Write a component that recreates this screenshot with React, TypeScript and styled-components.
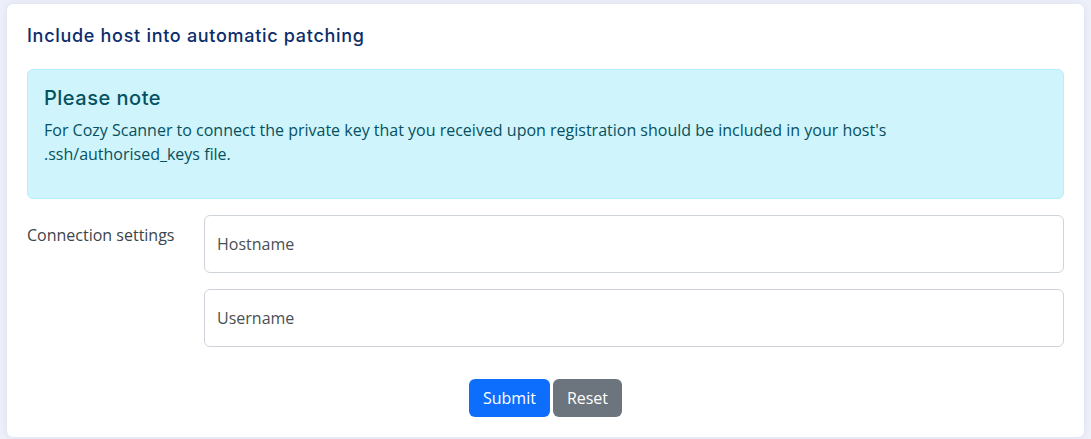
import React from "react";
import styled, { createGlobalStyle } from "styled-components";

const Global = createGlobalStyle`
  html, body { margin: 0; padding: 0; }
  body {
    background: #edf0f9;
    font-family: "Open Sans", "Liberation Sans", sans-serif;
  }
  * { box-sizing: border-box; }
`;

const Page = styled.div`
  padding: 4px 7px 2px 7px;
`;

const Card = styled.section`
  background: #ffffff;
  border-radius: 6px;
  box-shadow: 0 0 6px rgba(180, 190, 225, 0.35);
  padding: 21px 20px 20px 20px;
  height: 433px;
`;

const Title = styled.h5`
  margin: 0 0 22px 0;
  font-family: "Inter", "Noto Sans", sans-serif;
  font-weight: 500;
  font-size: 18px;
  line-height: 22px;
  color: #0b2d6b;
  letter-spacing: 0.7px;
`;

const Alert = styled.div`
  background: #cff4fc;
  border: 1px solid #b6effb;
  border-radius: 6px;
  color: #055160;
  padding: 15px 32px 15px 16px;
  height: 130px;
  margin-bottom: 16px;
`;

const AlertHeading = styled.h4`
  margin: 0 0 7px 0;
  font-family: "Inter", "Noto Sans", sans-serif;
  font-weight: 500;
  font-size: 20px;
  line-height: 26px;
  letter-spacing: 0.5px;
  color: #055160;
`;

const AlertText = styled.p`
  margin: 0;
  font-size: 16px;
  line-height: 24px;
`;

const FormRow = styled.div`
  display: grid;
  grid-template-columns: 177px 1fr;
  align-items: start;
`;

const Label = styled.label`
  font-size: 16px;
  line-height: 24px;
  color: #3d4449;
  padding-top: 8px;
`;

const Fields = styled.div`
  display: flex;
  flex-direction: column;
  gap: 16px;
`;

const Input = styled.input`
  width: 100%;
  height: 58px;
  border: 1px solid #ced4da;
  border-radius: 6px;
  padding: 0 12px;
  font-family: "Open Sans", "Liberation Sans", sans-serif;
  font-size: 16px;
  color: #212529;
  &::placeholder { color: #4a4f54; }
`;

const Actions = styled.div`
  display: flex;
  justify-content: center;
  gap: 3px;
  margin-top: 32px;
`;

const Button = styled.button<{ $variant: "primary" | "secondary" }>`
  height: 38px;
  padding: 0 14px;
  border: none;
  border-radius: 6px;
  font-family: "Open Sans", "Liberation Sans", sans-serif;
  font-size: 16px;
  color: #ffffff;
  background: ${(p) => (p.$variant === "primary" ? "#0d6efd" : "#6c757d")};
  cursor: pointer;
`;

export default function App() {
  return (
    <>
      <Global />
      <Page>
        <Card>
          <Title>Include host into automatic patching</Title>
          <Alert>
            <AlertHeading>Please note</AlertHeading>
            <AlertText>
              For Cozy Scanner to connect the private key that you received upon registration should be included in your host's .ssh/authorised_keys file.
            </AlertText>
          </Alert>
          <FormRow>
            <Label>Connection settings</Label>
            <Fields>
              <Input placeholder="Hostname" />
              <Input placeholder="Username" />
            </Fields>
          </FormRow>
          <Actions>
            <Button $variant="primary">Submit</Button>
            <Button $variant="secondary">Reset</Button>
          </Actions>
        </Card>
      </Page>
    </>
  );
}
